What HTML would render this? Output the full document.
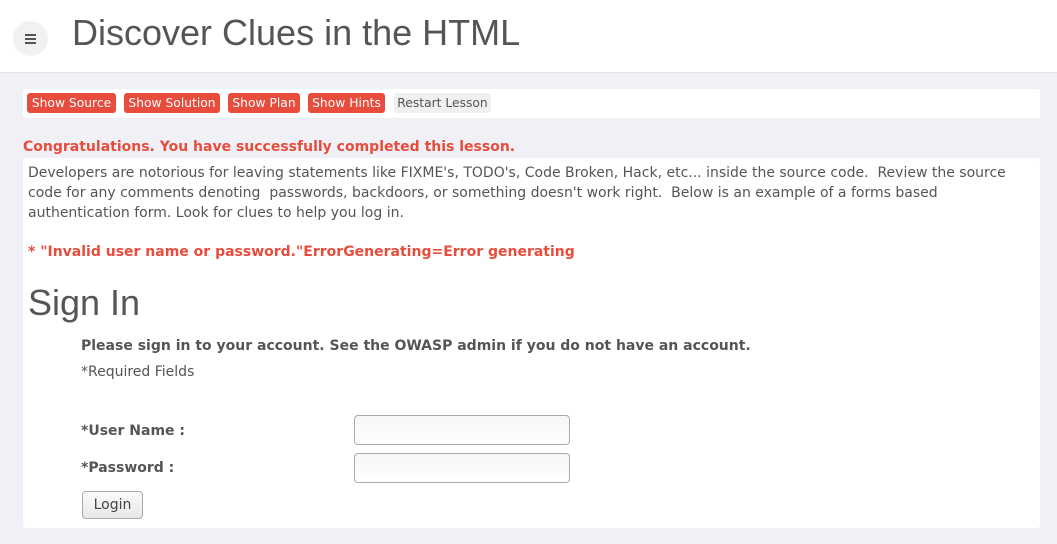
<!DOCTYPE html>
<html><head><style>
*{margin:0;padding:0;box-sizing:border-box}
body{width:1057px;height:544px;background:#f0f1f6;font-family:"DejaVu Sans",sans-serif;color:#555;position:relative;overflow:hidden}
.hdr{position:absolute;left:0;top:0;width:1057px;height:73px;background:#fff;border-bottom:1px solid #e2e3e8}
.burger{position:absolute;left:13px;top:21px;width:35px;height:35px;border-radius:50%;background:#f1f1f1}
.burger i{position:absolute;left:12px;width:11px;height:2px;background:#555}
h1{position:absolute;left:72px;top:12px;font-family:"Liberation Sans",sans-serif;font-weight:normal;font-size:36px;color:#555}
.bar{position:absolute;left:23px;top:89px;width:1017px;height:29px;background:#fff;border-radius:3px}
.b{position:absolute;top:4px;height:20px;font-size:12.3px;line-height:20px;text-align:center;border-radius:3px;background:#e74c3c;color:#fff;white-space:nowrap}
.b.g{background:#f0f0f0;color:#555}
.red{color:#e74c3c;font-weight:bold;font-size:14px;position:absolute;white-space:nowrap}
.box{position:absolute;left:23px;top:158px;width:1017px;height:370px;background:#fff;border-radius:3px}
.t{position:absolute;font-size:14px;line-height:20px}
.in{position:absolute;left:331px;width:216px;height:30px;border:1px solid #aaa;border-radius:4px;background:linear-gradient(#f6f6f6,#fff)}
</style></head><body>
<div class="hdr"><div class="burger"><i style="top:13px"></i><i style="top:17px"></i><i style="top:21px"></i></div>
<h1>Discover Clues in the HTML</h1></div>
<div class="bar">
<span class="b" style="left:4px;width:89px">Show Source</span>
<span class="b" style="left:101px;width:96px">Show Solution</span>
<span class="b" style="left:205px;width:72px">Show Plan</span>
<span class="b" style="left:285px;width:77px">Show Hints</span>
<span class="b g" style="left:371px;width:97px">Restart Lesson</span>
</div>
<div class="red" style="left:23px;top:139px">Congratulations. You have successfully completed this lesson.</div>
<div class="box">
<div class="t" style="left:5px;top:5px;width:1000px">Developers are notorious for leaving statements like FIXME's, TODO's, Code Broken, Hack, etc... inside the source code.&nbsp; Review the source code for any comments denoting &nbsp;passwords, backdoors, or something doesn't work right.&nbsp; Below is an example of a forms based authentication form. Look for clues to help you log in.</div>
<div class="red" style="left:5px;top:86px">* "Invalid user name or password."ErrorGenerating=Error generating</div>
<div style="position:absolute;left:5px;top:124px;font-family:'Liberation Sans',sans-serif;font-size:36px;color:#555">Sign In</div>
<div class="t" style="left:58px;top:178px;font-weight:bold">Please sign in to your account. See the OWASP admin if you do not have an account.</div>
<div class="t" style="left:58px;top:204px">*Required Fields</div>
<div class="t" style="left:58px;top:263px;font-weight:bold">*User Name :</div>
<div class="in" style="top:257px"></div>
<div class="t" style="left:58px;top:300px;font-weight:bold">*Password :</div>
<div class="in" style="top:295px"></div>
<div style="position:absolute;left:59px;top:333px;width:61px;height:28px;border:1px solid #aaa;border-radius:4px;background:linear-gradient(#fafafa,#e8e8e8);font-size:14px;line-height:26px;text-align:center;color:#444">Login</div>
</div>
</body></html>
